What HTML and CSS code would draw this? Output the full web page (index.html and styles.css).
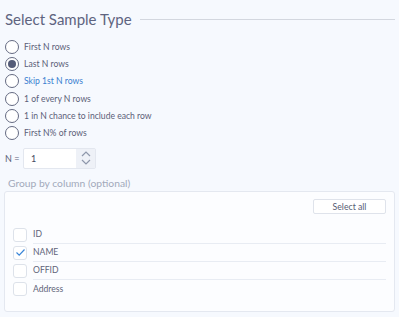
FILE: index.html
```html
<!DOCTYPE html>
<html lang="en">
<head>
  <meta charset="UTF-8">
  <title>Select Sample Type</title>
  <link rel="stylesheet" href="styles.css">
</head>
<body>
  <div class="panel">
    <div class="title-row">
      <h2>Select Sample Type</h2>
      <div class="rule"></div>
    </div>

    <div class="options">
      <label class="opt"><span class="radio"></span>First N rows</label>
      <label class="opt"><span class="radio on"></span>Last N rows</label>
      <label class="opt link"><span class="radio"></span>Skip 1st N rows</label>
      <label class="opt"><span class="radio"></span>1 of every N rows</label>
      <label class="opt"><span class="radio"></span>1 in N chance to include each row</label>
      <label class="opt"><span class="radio"></span>First N% of rows</label>
    </div>

    <div class="n-row">
      <span class="n-label">N =</span>
      <div class="spin">
        <span class="spin-val">1</span>
        <div class="spin-btns">
          <svg width="12" height="8" viewBox="0 0 12 8"><path d="M2 6 L6 2 L10 6" fill="none" stroke="#8e97ab" stroke-width="1.2"/></svg>
          <svg width="12" height="8" viewBox="0 0 12 8"><path d="M2 2 L6 6 L10 2" fill="none" stroke="#8e97ab" stroke-width="1.2"/></svg>
        </div>
      </div>
    </div>

    <div class="group-label">Group by column (optional)</div>
    <div class="group-box">
      <div class="box-top"><button class="select-all">Select all</button></div>
      <div class="col-row"><span class="check"></span><span class="col-name">ID</span></div>
      <div class="col-row"><span class="check">
        <svg width="11" height="9" viewBox="0 0 11 9"><path d="M1.5 4.5 L4.2 7.2 L9.5 1.5" fill="none" stroke="#3a86d8" stroke-width="1.2"/></svg>
      </span><span class="col-name">NAME</span></div>
      <div class="col-row"><span class="check"></span><span class="col-name">OFFID</span></div>
      <div class="col-row last"><span class="check"></span><span class="col-name">Address</span></div>
    </div>
  </div>
</body>
</html>
```

FILE: styles.css
```css
body {
  margin: 0;
  background: #f6f9fe;
  font-family: Lato, "Noto Sans", sans-serif;
  color: #5b6078;
}
.panel { padding: 4px 4px 10px 4px; }

.title-row { display: flex; align-items: center; height: 30px; }
.title-row h2 {
  margin: 0 8px 0 1px;
  font-size: 15px;
  font-weight: normal;
  color: #5e6480;
  white-space: nowrap;
}
.rule { flex: 1; height: 1px; background: #d3d7df; }

.options { margin-top: 4px; display: flex; flex-direction: column; }
.opt {
  display: flex;
  align-items: center;
  height: 17.3px;
  font-size: 8.6px;
  color: #5b6078;
}
.opt.link { color: #3a7fd0; }
.radio {
  width: 12px;
  height: 12px;
  border: 1px solid #646a82;
  border-radius: 50%;
  margin: 0 5px 0 1px;
  display: flex;
  align-items: center;
  justify-content: center;
  background: #fff;
}
.radio.on::after {
  content: "";
  width: 8px;
  height: 8px;
  border-radius: 50%;
  background: #545b78;
}

.n-row { display: flex; align-items: center; margin-top: 6px; }
.n-label { font-size: 9px; width: 18px; padding-left: 1px; }
.spin {
  display: flex;
  width: 73px;
  height: 21px;
  border: 1px solid #e3e7ef;
  border-radius: 2px;
  background: #fff;
  box-sizing: border-box;
}
.spin-val { flex: 1; font-size: 9px; padding: 4px 0 0 7px; color: #444a60; }
.spin-btns {
  width: 19px;
  background: #eef1f7;
  display: flex;
  flex-direction: column;
  align-items: center;
  justify-content: center;
}

.group-label { font-size: 10.3px; color: #a2a9bb; margin: 8px 0 0 4px; height: 13px; }
.group-box {
  margin-top: 1px;
  background: #fcfdff;
  border: 1px solid #e4e8f0;
  border-radius: 3px;
  padding: 7px 8px 8px 8px;
  height: 104px;
}
.box-top { display: flex; justify-content: flex-end; height: 16px; margin-bottom: 11px; }
.select-all {
  width: 73px;
  height: 15px;
  border: 1px solid #dfe3eb;
  border-radius: 2px;
  background: #fff;
  font-family: inherit;
  font-size: 8.7px;
  color: #555b72;
  padding: 0;
  line-height: 13px;
}
.col-row { display: flex; align-items: center; height: 18px; }
.check {
  width: 12px;
  height: 12px;
  border: 1px solid #dde2ea;
  border-radius: 3px;
  background: #fff;
  margin-right: 6px;
  display: flex;
  align-items: center;
  justify-content: center;
  flex: none;
}
.col-name {
  flex: 1;
  height: 18px;
  line-height: 18px;
  font-size: 8.6px;
  color: #5f6479;
  border-bottom: 1px solid #e8ecf3;
}
.col-row.last .col-name { border-bottom: none; }
```
